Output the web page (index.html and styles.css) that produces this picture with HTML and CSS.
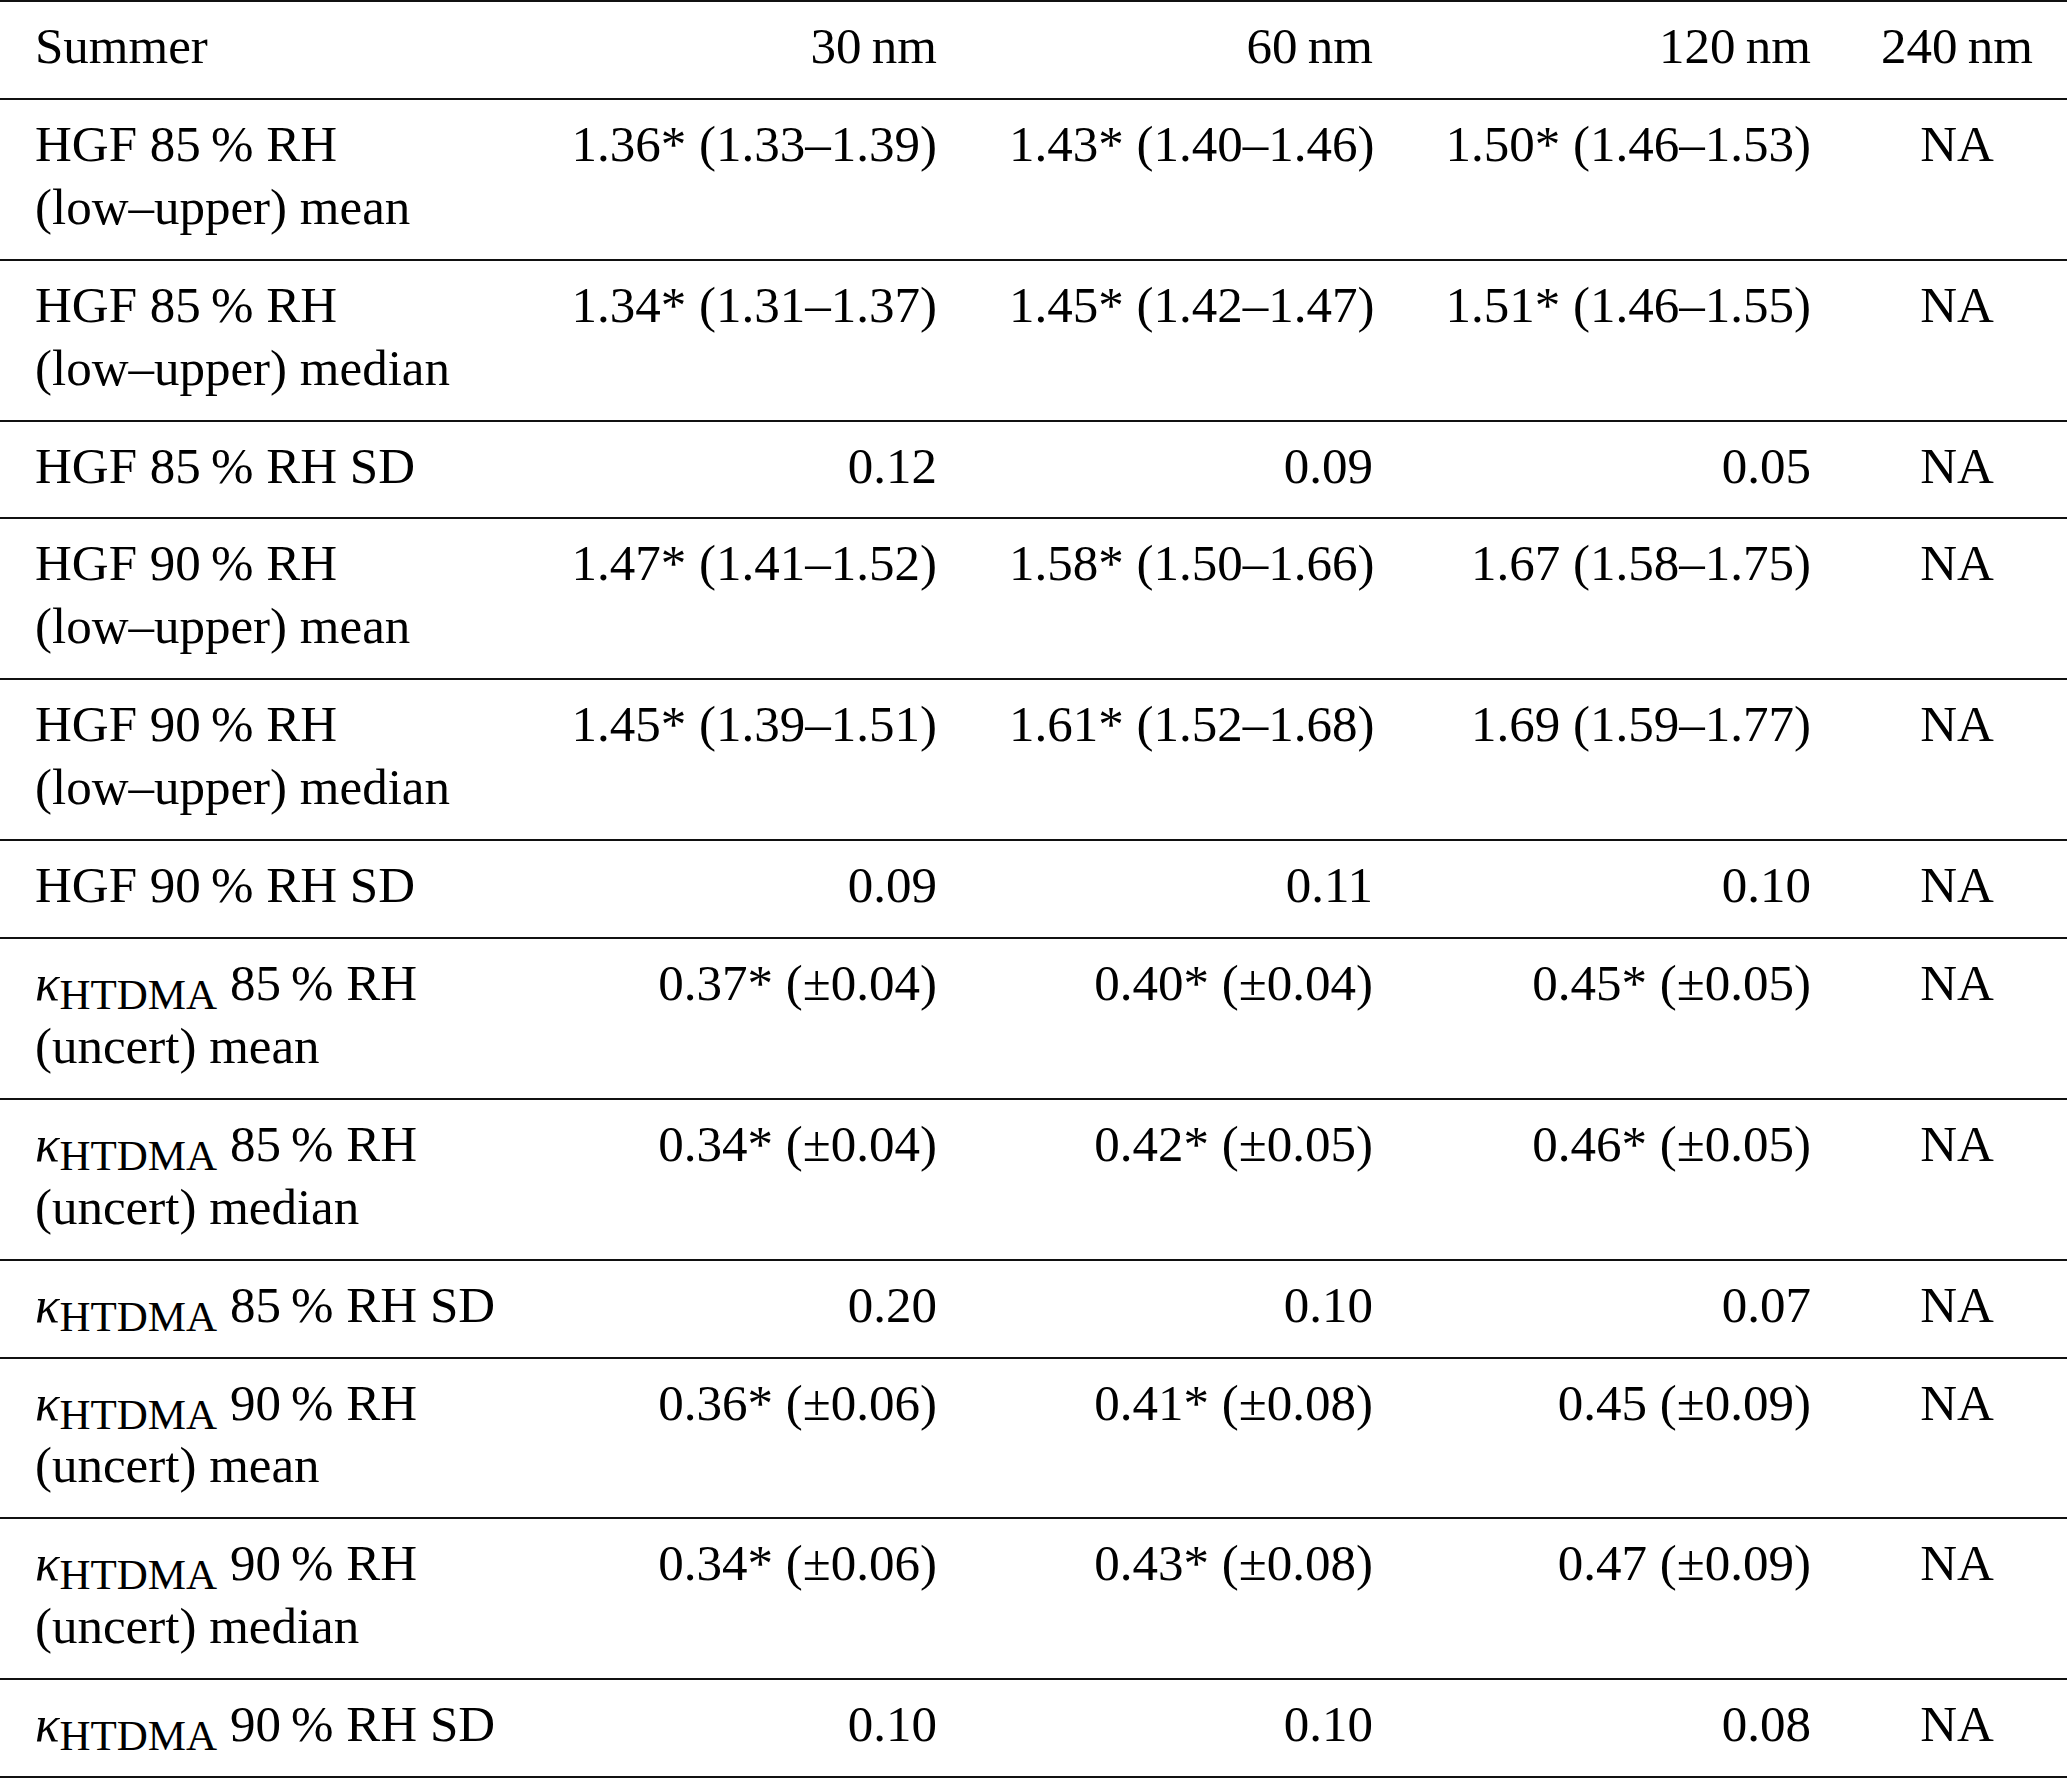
FILE: index.html
```html
<!DOCTYPE html>
<html lang="en">
<head>
<meta charset="utf-8">
<title>Summer HGF table</title>
<link rel="stylesheet" href="styles.css">
</head>
<body>
<table class="data">
  <colgroup>
    <col class="c1"><col class="c2"><col class="c3"><col class="c4"><col class="c5">
  </colgroup>
  <thead>
    <tr><th class="lab">Summer</th><th class="num">30&#8201;nm</th><th class="num">60&#8201;nm</th><th class="num">120&#8201;nm</th><th class="ctr">240&#8201;nm</th></tr>
  </thead>
  <tbody>
    <tr><td class="lab">HGF 85&#8201;% RH<br>(low–upper) mean</td><td class="num">1.36* (1.33–1.39)</td><td class="num">1.43* (1.40–1.46)</td><td class="num">1.50* (1.46–1.53)</td><td class="ctr">NA</td></tr>
    <tr><td class="lab">HGF 85&#8201;% RH<br>(low–upper) median</td><td class="num">1.34* (1.31–1.37)</td><td class="num">1.45* (1.42–1.47)</td><td class="num">1.51* (1.46–1.55)</td><td class="ctr">NA</td></tr>
    <tr><td class="lab">HGF 85&#8201;% RH SD</td><td class="num">0.12</td><td class="num">0.09</td><td class="num">0.05</td><td class="ctr">NA</td></tr>
    <tr><td class="lab">HGF 90&#8201;% RH<br>(low–upper) mean</td><td class="num">1.47* (1.41–1.52)</td><td class="num">1.58* (1.50–1.66)</td><td class="num">1.67 (1.58–1.75)</td><td class="ctr">NA</td></tr>
    <tr><td class="lab">HGF 90&#8201;% RH<br>(low–upper) median</td><td class="num">1.45* (1.39–1.51)</td><td class="num">1.61* (1.52–1.68)</td><td class="num">1.69 (1.59–1.77)</td><td class="ctr">NA</td></tr>
    <tr><td class="lab">HGF 90&#8201;% RH SD</td><td class="num">0.09</td><td class="num">0.11</td><td class="num">0.10</td><td class="ctr">NA</td></tr>
    <tr><td class="lab"><span class="k">κ</span><sub class="sb">HTDMA</sub> 85&#8201;% RH<br>(uncert) mean</td><td class="num">0.37* (±0.04)</td><td class="num">0.40* (±0.04)</td><td class="num">0.45* (±0.05)</td><td class="ctr">NA</td></tr>
    <tr><td class="lab"><span class="k">κ</span><sub class="sb">HTDMA</sub> 85&#8201;% RH<br>(uncert) median</td><td class="num">0.34* (±0.04)</td><td class="num">0.42* (±0.05)</td><td class="num">0.46* (±0.05)</td><td class="ctr">NA</td></tr>
    <tr><td class="lab"><span class="k">κ</span><sub class="sb">HTDMA</sub> 85&#8201;% RH SD</td><td class="num">0.20</td><td class="num">0.10</td><td class="num">0.07</td><td class="ctr">NA</td></tr>
    <tr><td class="lab"><span class="k">κ</span><sub class="sb">HTDMA</sub> 90&#8201;% RH<br>(uncert) mean</td><td class="num">0.36* (±0.06)</td><td class="num">0.41* (±0.08)</td><td class="num">0.45 (±0.09)</td><td class="ctr">NA</td></tr>
    <tr><td class="lab"><span class="k">κ</span><sub class="sb">HTDMA</sub> 90&#8201;% RH<br>(uncert) median</td><td class="num">0.34* (±0.06)</td><td class="num">0.43* (±0.08)</td><td class="num">0.47 (±0.09)</td><td class="ctr">NA</td></tr>
    <tr><td class="lab"><span class="k">κ</span><sub class="sb">HTDMA</sub> 90&#8201;% RH SD</td><td class="num">0.10</td><td class="num">0.10</td><td class="num">0.08</td><td class="ctr">NA</td></tr>
  </tbody>
</table>
</body>
</html>
```
FILE: styles.css
```css
html, body {
  margin: 0;
  padding: 0;
  background: #fff;
}
body {
  font-family: "Liberation Serif", "Times New Roman", serif;
  font-size: 51px;
  line-height: 62.9px;
  color: #000;
}
.data {
  width: 2067px;
  border-collapse: collapse;
  table-layout: fixed;
  border-top: 2px solid #111;
}
.c1 { width: 535px; }
.c2 { width: 438px; }
.c3 { width: 436px; }
.c4 { width: 438px; }
.c5 { width: 220px; }
.data th, .data td {
  font-weight: normal;
  vertical-align: top;
  padding: 13px 36px 20px 36px;
  border-bottom: 2px solid #111;
  white-space: nowrap;
}
.data .lab { text-align: left; padding-left: 35px; }
.data .num { text-align: right; }
.data .ctr { text-align: center; padding-left: 0; padding-right: 0; }
.k { font-style: italic; }
.sb {
  font-size: 43px;
  line-height: 0;
  vertical-align: -9px;
}
```
